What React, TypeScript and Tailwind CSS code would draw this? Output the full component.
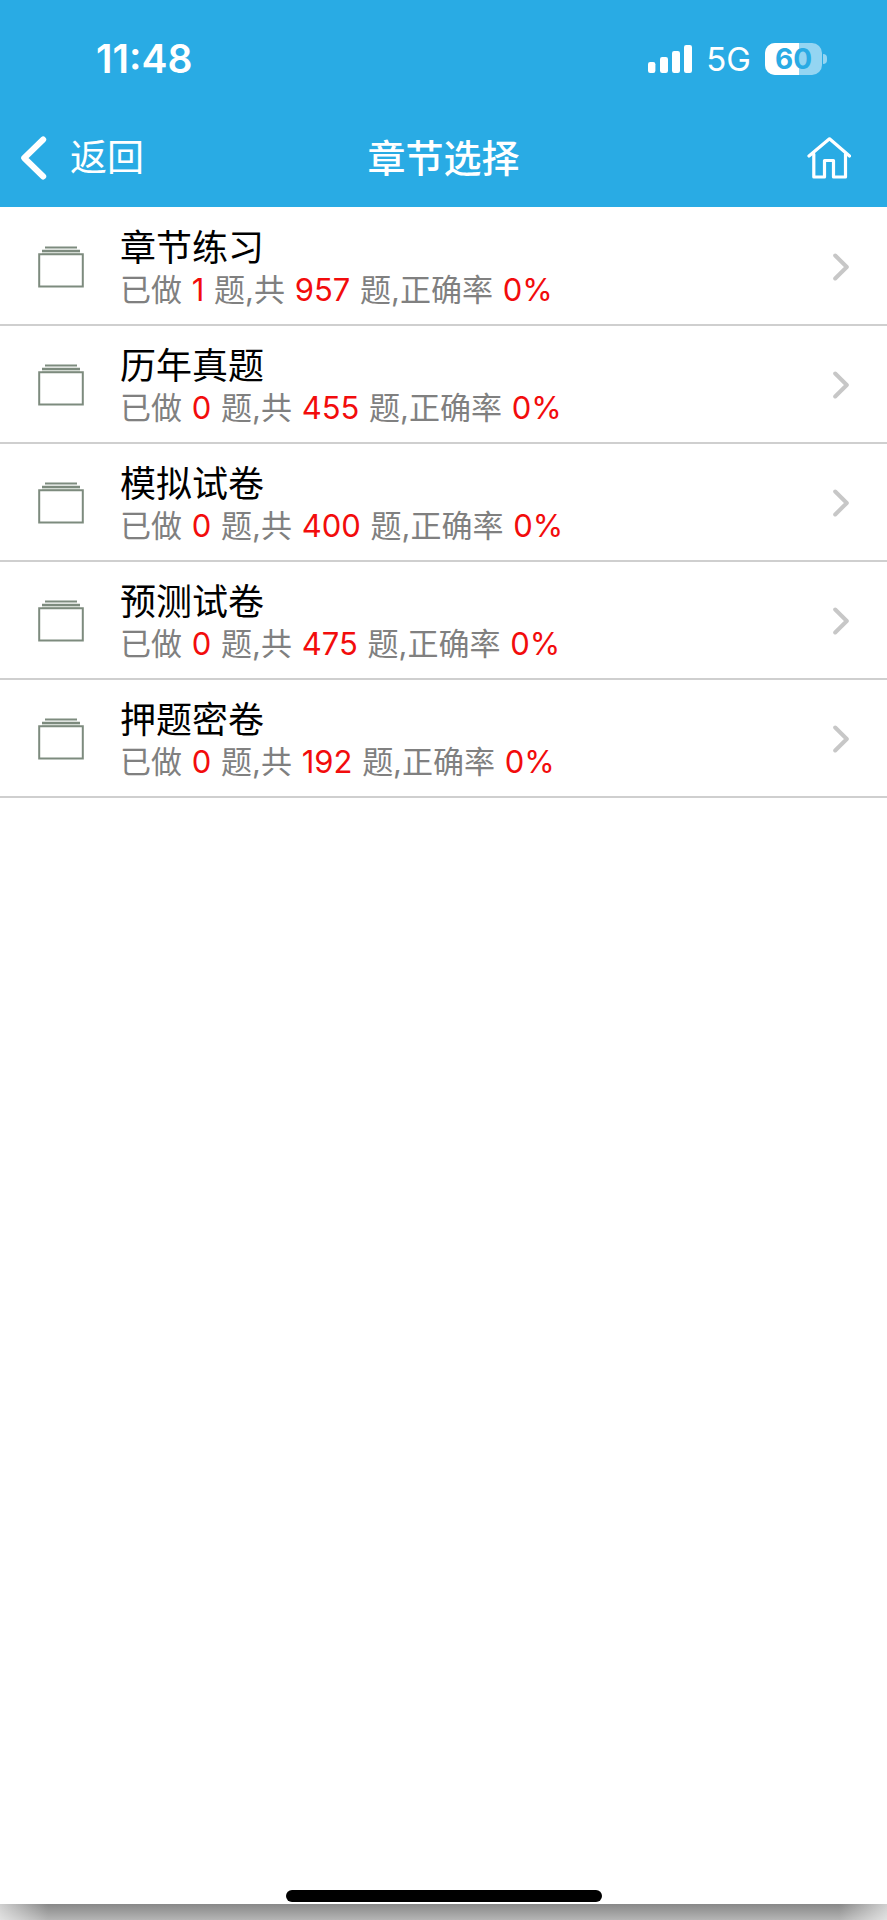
import React from 'react';

interface Chapter {
  id: number;
  title: string;
  done: number;
  total: number;
  rate: string;
}

const chapters: Chapter[] = [
  { id: 1, title: '章节练习', done: 1, total: 957, rate: '0%' },
  { id: 2, title: '历年真题', done: 0, total: 455, rate: '0%' },
  { id: 3, title: '模拟试卷', done: 0, total: 400, rate: '0%' },
  { id: 4, title: '预测试卷', done: 0, total: 475, rate: '0%' },
  { id: 5, title: '押题密卷', done: 0, total: 192, rate: '0%' }
];

function SignalIcon() {
  return (
    <svg className="h-7 w-11" viewBox="0 0 44 28" fill="currentColor" aria-hidden="true">
      <rect x="0" y="17" width="7.4" height="11" rx="2.2" />
      <rect x="12" y="12" width="8" height="16" rx="2.2" />
      <rect x="24" y="6" width="8" height="22" rx="2.2" />
      <rect x="36" y="0" width="8" height="28" rx="2.2" />
    </svg>
  );
}

function Battery({ level }: { level: number }) {
  return (
    <div className="flex items-center gap-px">
      <div className="relative flex h-8 w-[57px] items-center justify-center overflow-hidden rounded-[10px] bg-white/50">
        <div className="absolute inset-y-0 left-0 bg-white" style={{ width: `${level}%` }} />
        <span className="relative text-[28px] leading-8 font-bold text-[#29abe4]">{level}</span>
      </div>
      <div className="h-[10px] w-1 rounded-r-full bg-white/50" />
    </div>
  );
}

function BackIcon() {
  return (
    <svg className="h-11 w-7" viewBox="0 0 28 44" fill="none" stroke="currentColor" strokeWidth="6" strokeLinecap="round" strokeLinejoin="round" aria-hidden="true">
      <path d="M23.2 3.5 4.200 22l19 18.5" />
    </svg>
  );
}

function HomeIcon() {
  return (
    <svg className="h-11 w-11" viewBox="0 0 44 44" fill="none" stroke="currentColor" strokeWidth="3.2" strokeLinecap="round" strokeLinejoin="round" aria-hidden="true">
      <path d="M2 20 22.500 2.800 42.500 20" />
      <path d="M6.800 18v23h10.700V24.500h9V41H38.500V18" />
    </svg>
  );
}

function FolderIcon() {
  return (
    <svg className="h-[42px] w-[46px] shrink-0" viewBox="0 0 46 42" fill="none" stroke="#7d8b7e" aria-hidden="true">
      <path d="M4 4h38v4H4z" fill="#d3dad3" stroke="none" />
      <path d="M7 1.500h32M4 4.800h38" strokeWidth="2.200" />
      <path d="M1.200 8.200h43.600v32.300H1.200z" strokeWidth="2" />
    </svg>
  );
}

function ArrowIcon() {
  return (
    <svg className="h-7 w-4 shrink-0" viewBox="0 0 16 28" fill="none" stroke="#c7c7c7" strokeWidth="4" strokeLinecap="round" strokeLinejoin="round" aria-hidden="true">
      <path d="M2.200 2.500 13.800 14 2.200 25.500" />
    </svg>
  );
}

function Num({ children }: { children: React.ReactNode }) {
  return <span className="px-px text-[#f20c0c]">{children}</span>;
}

export default function App() {
  return (
    <div className="flex min-h-screen flex-col bg-white font-['Inter','Noto_Sans_CJK_SC',sans-serif]">
      <header className="bg-[#29abe4] text-white">
        {/* 状态栏 */}
        <div className="flex h-[108px] items-center justify-between pt-2.5 pr-[60px] pl-24">
          <span className="text-[39px] leading-10 font-semibold">11:48</span>
          <div className="flex items-center gap-3.5">
            <SignalIcon />
            <span className="text-[33px] leading-8">5G</span>
            <Battery level={60} />
          </div>
        </div>

        {/* 导航栏 */}
        <div className="grid h-[99px] grid-cols-[1fr_auto_1fr] items-center px-5">
          <a href="#back" className="flex items-center gap-[22px] justify-self-start text-[37px] leading-10">
            <BackIcon />
            返回
          </a>
          <h1 className="text-[38px] leading-10 font-medium">章节选择</h1>
          <a href="#home" aria-label="首页" className="mr-4 justify-self-end">
            <HomeIcon />
          </a>
        </div>
      </header>

      {/* 章节列表 */}
      <main className="flex-1">
        <ul className="pt-px">
          {chapters.map(item => (
            <li key={item.id} className="border-b-2 border-[#cfcfcf]">
              <a href={`#chapter-${item.id}`} className="flex h-[116px] items-center px-[38px] pt-0.5">
                <FolderIcon />
                <div className="ml-9 flex-1 pt-0.5">
                  <h2 className="text-[36px] leading-[44px] text-black">{item.title}</h2>
                  <p className="text-[31px] leading-10 text-[#808080]">
                    已做 <Num>{item.done}</Num> 题,共 <Num>{item.total}</Num> 题,正确率 <Num>{item.rate}</Num>
                  </p>
                </div>
                <ArrowIcon />
              </a>
            </li>
          ))}
        </ul>
      </main>

      {/* 底部横条 */}
      <footer>
        <div className="mx-auto mb-0.5 h-3 w-[316px] rounded-full bg-black" />
        <div className="h-4 bg-linear-to-b from-[#888888] to-[#b5b5b5]">
          <div className="flex h-full justify-between">
            <div className="w-12 bg-linear-to-r from-white/60 to-transparent" />
            <div className="w-12 bg-linear-to-l from-white/60 to-transparent" />
          </div>
        </div>
      </footer>
    </div>
  );
}
